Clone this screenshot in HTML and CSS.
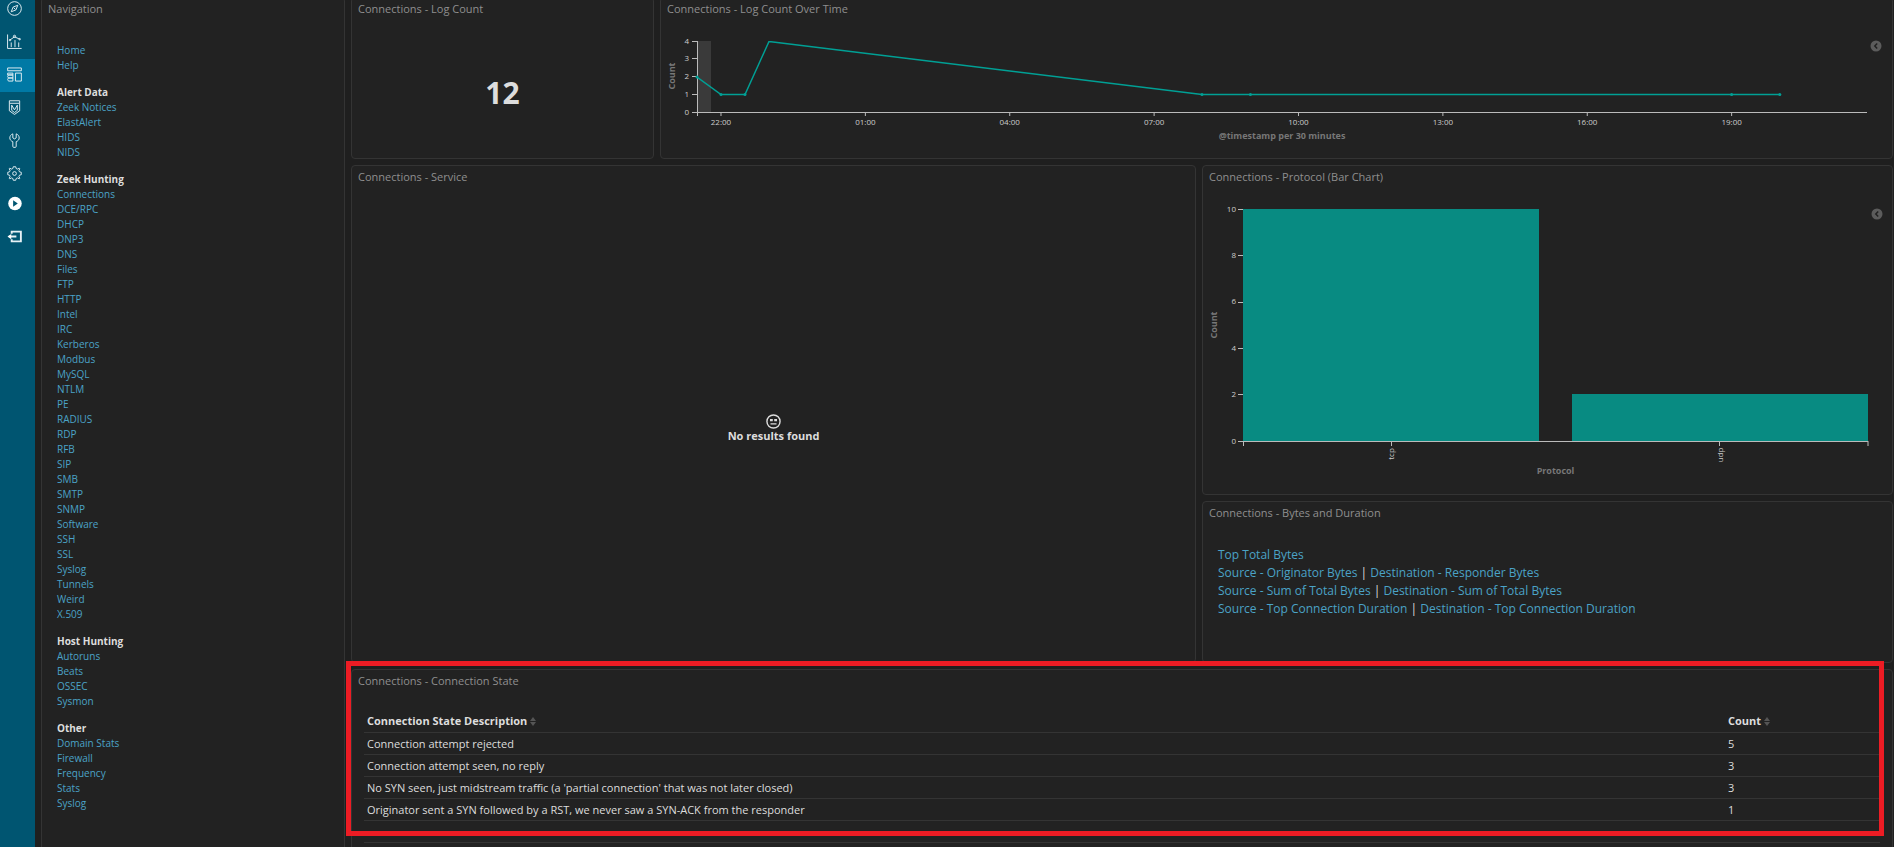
FILE: index.html
```html
<!DOCTYPE html>
<html lang="en">
<head>
<meta charset="utf-8">
<title>Connections dashboard</title>
<link rel="stylesheet" href="styles.css">
</head>
<body>
<nav class="rail" aria-label="Applications">
  <a href="#discover" aria-label="Discover"><svg viewBox="0 0 16 16"><circle cx="8" cy="8" r="7.3"/><path d="M11.500 4.500 9.500 9.500 4.500 11.500l2-5z"/><path d="m7.200 7.200 1.600 1.600"/></svg></a>
  <a href="#visualize" aria-label="Visualize"><svg viewBox="0 0 16 16"><path d="M.6.500v14.900h15"/><path d="M3 6.500 8 3l5.500 2.500M4.500 9v5M8.500 6.500V14M12.500 9v5"/><circle cx="8" cy="2.500" r="1.200"/><circle cx="3.200" cy="6.500" r=".8"/><circle cx="13.500" cy="5.500" r=".8"/></svg></a>
  <a href="#dashboard" class="current" aria-label="Dashboard"><svg viewBox="0 0 16 16"><path d="M.7 1h14.600v3H.7zM9 6.500h6.300V15H9zM.7 6.500h5.600v2H.7zM2 8.500h4.300v3.200H2c-1.700 0-1.700-3.200 0-3.200zM2 11.700h4.300V15H2c-1.700 0-1.700-3.300 0-3.300z"/></svg></a>
  <a href="#timelion" aria-label="Timelion"><svg viewBox="0 0 16 16"><path d="M2.500.8h11v2.700h-11zM2.500 3.500v8L8 15.400l5.500-3.900v-8M5 5.500v5.500l3 2.400 3-2.400V5.500L8 10.500z"/></svg></a>
  <a href="#devtools" aria-label="Dev Tools"><svg viewBox="0 0 16 16"><path d="M6.200.9C4.200 1.700 3 3.200 3 5.300c0 1.800 1.300 3.200 3.200 4v5c0 .7.400 1 1 1h1.600c.6 0 1-.3 1-1v-5C11.700 8.500 13 7.100 13 5.300c0-2.100-1.200-3.600-3.200-4.400v4.300L8 6.300 6.200 5.200z"/></svg></a>
  <a href="#management" aria-label="Management"><svg viewBox="0 0 16 16"><circle cx="8" cy="8" r="2"/><path d="m6.700.8-.5 1.900-1.500.6L3 2.300 2.300 3l1 1.700-.6 1.500-1.900.5v2.600l1.900.5.6 1.500-1 1.700.7.700 1.700-1 1.500.6.500 1.900h2.600l.5-1.900 1.500-.6 1.700 1 .7-.7-1-1.700.6-1.500 1.900-.5V6.700l-1.900-.5-.6-1.500 1-1.700-.7-.7-1.700 1-1.500-.6L9.300.8z"/></svg></a>
  <a href="#squert" class="short" aria-label="Squert"><svg viewBox="0 0 16 16"><circle class="solid" cx="8.500" cy="8" r="7.200"/><path class="cut" d="M6.500 4.500v7l5-3.500z"/></svg></a>
  <a href="#logout" aria-label="Logout"><svg viewBox="0 0 16 16"><path class="thick" d="M5 5V2.800h9.800v10.400H5V11M2 8h8"/><path class="solid" d="M4.500 5.200.5 8l4 2.800z"/></svg></a>
</nav>

<main class="board">
  <section class="panel">
    <h2>Navigation</h2>
    <div class="links">
      <ul>
        <li><a href="#">Home</a></li><li><a href="#">Help</a></li>
      </ul>
      <h3>Alert Data</h3>
      <ul>
        <li><a href="#">Zeek Notices</a></li><li><a href="#">ElastAlert</a></li><li><a href="#">HIDS</a></li><li><a href="#">NIDS</a></li>
      </ul>
      <h3>Zeek Hunting</h3>
      <ul>
        <li><a href="#">Connections</a></li><li><a href="#">DCE/RPC</a></li><li><a href="#">DHCP</a></li><li><a href="#">DNP3</a></li><li><a href="#">DNS</a></li><li><a href="#">Files</a></li><li><a href="#">FTP</a></li><li><a href="#">HTTP</a></li><li><a href="#">Intel</a></li><li><a href="#">IRC</a></li><li><a href="#">Kerberos</a></li><li><a href="#">Modbus</a></li><li><a href="#">MySQL</a></li><li><a href="#">NTLM</a></li><li><a href="#">PE</a></li><li><a href="#">RADIUS</a></li><li><a href="#">RDP</a></li><li><a href="#">RFB</a></li><li><a href="#">SIP</a></li><li><a href="#">SMB</a></li><li><a href="#">SMTP</a></li><li><a href="#">SNMP</a></li><li><a href="#">Software</a></li><li><a href="#">SSH</a></li><li><a href="#">SSL</a></li><li><a href="#">Syslog</a></li><li><a href="#">Tunnels</a></li><li><a href="#">Weird</a></li><li><a href="#">X.509</a></li>
      </ul>
      <h3>Host Hunting</h3>
      <ul>
        <li><a href="#">Autoruns</a></li><li><a href="#">Beats</a></li><li><a href="#">OSSEC</a></li><li><a href="#">Sysmon</a></li>
      </ul>
      <h3>Other</h3>
      <ul>
        <li><a href="#">Domain Stats</a></li><li><a href="#">Firewall</a></li><li><a href="#">Frequency</a></li><li><a href="#">Stats</a></li><li><a href="#">Syslog</a></li>
      </ul>
    </div>
  </section>

  <div class="content">
    <div class="row row-top">
      <section class="panel">
        <h2>Connections - Log Count</h2>
        <p class="metric">12</p>
      </section>
      <section class="panel">
        <h2>Connections - Log Count Over Time</h2>
        <div class="chart">
          <svg class="plot plot-time" role="img" aria-label="Count per 30 minutes">
            <rect class="band" x="0" y="0" width="14" height="71"/>
            <path class="axis" d="M.5 0v75M-5 .5H0M-5 17.500H0M-5 35.500H0M-5 53.500H0"/>
            <line class="axis" x1="-5" y1="71.500" x2="100%" y2="71.500"/>
            <g class="ends">
              <text x="-8" y="3">4</text><text x="-8" y="20">3</text><text x="-8" y="38">2</text><text x="-8" y="56">1</text><text x="-8" y="74">0</text>
            </g>
            <svg x="2.050%" class="mark"><path class="axis" d="M0 71v4"/><text x="0" y="84">22:00</text></svg>
            <svg x="14.390%" class="mark"><path class="axis" d="M0 71v4"/><text x="0" y="84">01:00</text></svg>
            <svg x="26.730%" class="mark"><path class="axis" d="M0 71v4"/><text x="0" y="84">04:00</text></svg>
            <svg x="39.070%" class="mark"><path class="axis" d="M0 71v4"/><text x="0" y="84">07:00</text></svg>
            <svg x="51.410%" class="mark"><path class="axis" d="M0 71v4"/><text x="0" y="84">10:00</text></svg>
            <svg x="63.750%" class="mark"><path class="axis" d="M0 71v4"/><text x="0" y="84">13:00</text></svg>
            <svg x="76.090%" class="mark"><path class="axis" d="M0 71v4"/><text x="0" y="84">16:00</text></svg>
            <svg x="88.430%" class="mark"><path class="axis" d="M0 71v4"/><text x="0" y="84">19:00</text></svg>
            <svg width="100%" height="71" viewBox="0 0 1170 71" preserveAspectRatio="none"><polyline class="series" points="0,36 24,53.500 48,53.500 72,.5 505,53.500 1083,53.500"/></svg>
            <g class="dots"><circle cx="0" cy="36" r="1.500"/><circle cx="2.050%" cy="53.500" r="1.500"/><circle cx="4.100%" cy="53.500" r="1.500"/><circle cx="43.160%" cy="53.500" r="1.500"/><circle cx="47.300%" cy="53.500" r="1.500"/><circle cx="88.430%" cy="53.500" r="1.500"/><circle cx="92.550%" cy="53.500" r="1.500"/></g>
            <text class="name" x="50%" y="98">@timestamp per 30 minutes</text>
            <text class="name" transform="translate(-22 35) rotate(-90)">Count</text>
          </svg>
          <button class="toggle" aria-label="Toggle legend"><svg viewBox="0 0 12 12"><circle cx="6" cy="6" r="5.500"/><path d="M7.200 3.500 4.800 6l2.400 2.500"/></svg></button>
        </div>
      </section>
    </div>

    <div class="row row-middle">
      <section class="panel">
        <h2>Connections - Service</h2>
        <div class="empty">
          <svg viewBox="0 0 16 16"><circle cx="8" cy="8" r="7"/><path d="M4.800 10.500h6.400M5 6h1.500v1H5zM9.500 6H11v1H9.500z"/></svg>
          <p>No results found</p>
        </div>
      </section>
      <div class="stack">
        <section class="panel">
          <h2>Connections - Protocol (Bar Chart)</h2>
          <div class="chart">
            <svg class="plot plot-bars" role="img" aria-label="Count by protocol">
              <rect class="bar" x="0" y="0" width="47.360%" height="232"/>
              <rect class="bar" x="52.640%" y="185" width="47.360%" height="47"/>
              <path class="axis" d="M.5 232v5M-5 .5H0M-5 46.500H0M-5 93.500H0M-5 139.500H0M-5 185.500H0"/>
              <line class="axis" x1="-5" y1="232.500" x2="100%" y2="232.500"/>
              <line class="axis" x1="100%" y1="232" x2="100%" y2="237"/>
              <g class="ends">
                <text x="-7" y="3">10</text><text x="-7" y="49">8</text><text x="-7" y="95">6</text><text x="-7" y="142">4</text><text x="-7" y="188">2</text><text x="-7" y="235">0</text>
              </g>
              <svg x="23.760%" class="mark"><path class="axis" d="M0 232v5"/><text transform="translate(2 245) rotate(-90)">tcp</text></svg>
              <svg x="76.240%" class="mark"><path class="axis" d="M0 232v5"/><text transform="translate(3 246) rotate(-90)">udp</text></svg>
              <text class="name" x="50%" y="265">Protocol</text>
              <text class="name" transform="translate(-26 116) rotate(-90)">Count</text>
            </svg>
            <button class="toggle" aria-label="Toggle legend"><svg viewBox="0 0 12 12"><circle cx="6" cy="6" r="5.500"/><path d="M7.200 3.500 4.800 6l2.400 2.500"/></svg></button>
          </div>
        </section>
        <section class="panel">
          <h2>Connections - Bytes and Duration</h2>
          <div class="pairs">
            <p><a href="#">Top Total Bytes</a></p>
            <p><a href="#">Source - Originator Bytes</a> | <a href="#">Destination - Responder Bytes</a></p>
            <p><a href="#">Source - Sum of Total Bytes</a> | <a href="#">Destination - Sum of Total Bytes</a></p>
            <p><a href="#">Source - Top Connection Duration</a> | <a href="#">Destination - Top Connection Duration</a></p>
          </div>
        </section>
      </div>
    </div>

    <section class="panel state">
      <h2>Connections - Connection State</h2>
      <table>
        <thead><tr>
          <th>Connection State Description<svg class="sort" viewBox="0 0 6 9"><path d="M3 0l3 4H0zM3 9l3-4H0z"/></svg></th>
          <th class="num">Count<svg class="sort" viewBox="0 0 6 9"><path d="M3 0l3 4H0zM3 9l3-4H0z"/></svg></th>
        </tr></thead>
        <tbody>
          <tr><td>Connection attempt rejected</td><td>5</td></tr>
          <tr><td>Connection attempt seen, no reply</td><td>3</td></tr>
          <tr><td>No SYN seen, just midstream traffic (a 'partial connection' that was not later closed)</td><td>3</td></tr>
          <tr><td>Originator sent a SYN followed by a RST, we never saw a SYN-ACK from the responder</td><td>1</td></tr>
          <tr><td></td><td></td></tr>
        </tbody>
      </table>
      <div class="highlight"></div>
    </section>
  </div>
</main>
</body>
</html>
```

FILE: styles.css
```css
* { box-sizing: border-box; }

body {
  display: flex;
  height: 100vh;
  margin: 0;
  overflow: hidden;
  background: #1f1f1f;
  color: #ddd;
  font: 11px/15px "Open Sans", "Noto Sans", sans-serif;
}

h2, h3, p, ul { margin: 0; padding: 0; font-size: inherit; }
ul { list-style: none; }
a { color: #4ba3c7; text-decoration: none; }

/* Application rail */
.rail { flex: none; width: 35px; height: calc(100vh + 7px); margin-top: -7px; background: #005571; }
.rail a { display: flex; align-items: center; height: 33px; padding: 0 0 2px 7px; }
.rail .short { height: 27px; margin-bottom: 3px; }
.rail .current { background: #0079a5; }
.rail svg { width: 15px; height: 15px; fill: none; stroke: #e6f1f5; stroke-width: 1; }
.rail .solid { fill: #fff; stroke: none; }
.rail .cut { fill: #005571; stroke: none; }
.rail .thick { stroke-width: 2; }

/* Panel grid, scrolled slightly past its top edge */
.board {
  flex: 1;
  display: grid;
  grid-template-columns: 304fr 1542fr;
  gap: 6px;
  height: calc(100vh + 16px);
  margin-top: -3px;
  padding: 0 1px 0 6px;
}
.content { display: flex; flex-direction: column; gap: 6px; min-width: 0; }
.row { display: grid; flex: none; gap: 6px; }
.row-top { grid-template-columns: 303fr 1233fr; height: 162px; }
.row-middle { grid-template-columns: 845fr 691fr; height: 498px; }
.stack { display: grid; grid-template-rows: 330px 162px; gap: 6px; }
.state { position: relative; flex: 1; }

.panel {
  display: flex;
  flex-direction: column;
  min-width: 0;
  border: 1px solid #343434;
  border-radius: 4px;
  background: #222;
}
.panel h2 { padding: 3px 6px 4px; color: #8f8f8f; font-weight: 400; line-height: 16px; }

.links { padding: 22px 15px 0; font-size: 10px; }
.links h3 { margin-top: 12px; color: #ddd; }

.metric { flex: 1; padding-top: 64px; font-size: 30px; line-height: 16px; font-weight: 700; text-align: center; }

.empty { flex: 1; display: flex; flex-direction: column; align-items: center; justify-content: center; padding-top: 4px; font-weight: 700; }
.empty svg { width: 15px; height: 15px; fill: none; stroke: #ddd; stroke-width: 1.5; }
.empty p { line-height: 13px; }

.pairs { padding: 21px 15px; font-size: 12px; line-height: 18px; }

/* Charts */
.chart { display: flex; gap: 3px; padding: 20px 10px 0 36px; }
.stack .chart { padding: 20px 9px 0 40px; }
.plot { flex: 1; min-width: 0; overflow: visible; fill: #ccc; font-size: 8px; }
.plot-time { height: 71px; }
.plot-bars { height: 232px; }
.plot text { text-anchor: middle; }
.plot .ends text { text-anchor: end; }
.plot .name { fill: #777; font-size: 9px; font-weight: 700; }
.mark { overflow: visible; }
.axis { fill: none; stroke: #bbb; stroke-width: 1; }
.band { fill: #3a3a3a; }
.bar { fill: #088b82; }
.series { fill: none; stroke: #00a095; stroke-width: 1.5; vector-effect: non-scaling-stroke; }
.dots { fill: #00a095; }
.toggle { flex: none; width: 12px; height: 12px; margin-top: -1px; padding: 0; border: 0; background: none; }
.toggle svg { display: block; width: 12px; height: 12px; fill: #5c5c5c; }
.toggle path { fill: none; stroke: #222; stroke-width: 1.5; }

/* Connection state table */
table { width: auto; margin: 17px 12px 0; border-collapse: collapse; text-align: left; }
th, td { height: 22px; padding: 0 3px; border-bottom: 1px solid #343434; }
.num { width: 155px; }
.sort { width: 6px; height: 9px; margin-left: 3px; fill: #555; vertical-align: -1px; }

.highlight { position: absolute; top: -9px; left: -6px; right: 8px; height: 175px; border: 5px solid #ed1c24; pointer-events: none; }
```
